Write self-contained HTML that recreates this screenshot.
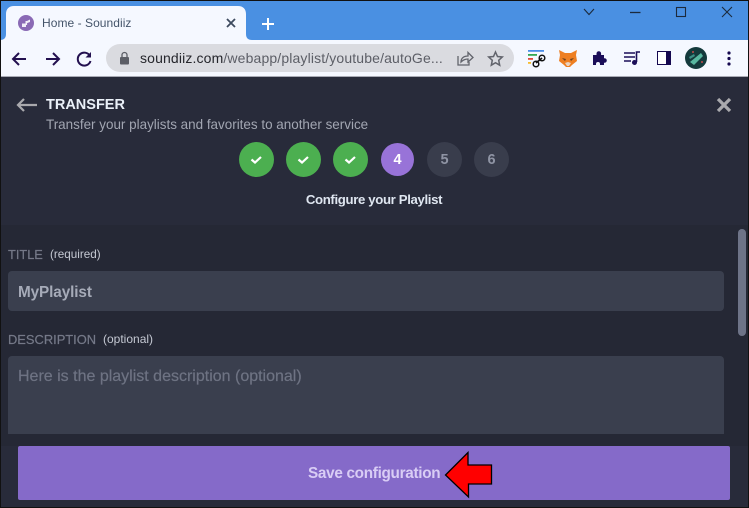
<!DOCTYPE html>
<html><head><meta charset="utf-8"><style>
html,body{margin:0;padding:0}
body{width:749px;height:508px;position:relative;overflow:hidden;background:#282b3a;font-family:"Liberation Sans",sans-serif}
.a{position:absolute;white-space:nowrap}
.c{position:absolute;width:35px;height:35px;border-radius:50%;top:142px;text-align:center;line-height:36px;font-weight:bold;font-size:14.500px}
</style></head><body>
<div class="a" style="left:0;top:0;width:749px;height:40px;background:#4a90e2"></div>
<div class="a" style="left:0;top:0;width:749px;height:1px;background:#111"></div>
<svg class="a" style="left:0;top:0" width="260" height="41" viewBox="0 0 260 41"><path d="M0 40 C4 40 6 38 6 34 V14 C6 9 9 6 14 6 H238 C243 6 246 9 246 14 V34 C246 38 248 40 252 40Z" fill="#f5f8ff"/></svg>
<svg class="a" style="left:18px;top:15px" width="16" height="16" viewBox="0 0 16 16"><circle cx="8" cy="8" r="8" fill="#8a6ab5"/><path d="M4 8.500h4v3.500H4zM8 6.500l4-2v2.500l-4 1.500z" fill="#f2eef8"/><rect x="7.500" y="6" width="1.600" height="4" fill="#f2eef8"/></svg>
<div class="a" style="left:42px;top:15px;font-size:12px;line-height:16px;color:#44546a;letter-spacing:.05px">Home - Soundiiz</div>
<svg class="a" style="left:225px;top:17px" width="12" height="12" viewBox="0 0 12 12"><path d="M2 2l8 8M10 2l-8 8" stroke="#3d4a5f" stroke-width="1.800"/></svg>
<svg class="a" style="left:261px;top:17px" width="14" height="14" viewBox="0 0 14 14"><path d="M7 1v12M1 7h12" stroke="#fff" stroke-width="2"/></svg>
<svg class="a" style="left:580px;top:4px" width="165" height="22" viewBox="0 0 165 22" fill="none" stroke="#1c2a3c" stroke-width="1.100"><path d="M4 5l5 5.500L14 5"/><path d="M50 8.500h10.500" stroke-width="1.300"/><rect x="96.500" y="3.500" width="9" height="9"/><path d="M142 3l10 10M152 3L142 13"/></svg>
<div class="a" style="left:0;top:40px;width:749px;height:36px;background:#f5f8ff"></div>
<div class="a" style="left:0;top:76px;width:749px;height:1px;background:#a9abb5"></div>
<svg class="a" style="left:10px;top:48px" width="90" height="22" viewBox="0 0 90 22" fill="none" stroke="#23104f" stroke-width="2"><path d="M3 11h13M9 5l-6 6 6 6"/><path d="M36 11h13M43 5l6 6-6 6"/><path d="M80 8a6.500 6.500 0 1 0 .5 5"/><path d="M81 4v5.500h-5.500" fill="#23104f" stroke="none"/></svg>
<div class="a" style="left:106px;top:44px;width:408px;height:28px;border-radius:14px;background:#dadbe0"></div>
<svg class="a" style="left:118px;top:51px" width="13" height="14" viewBox="0 0 13 14"><rect x="2" y="6" width="9" height="7.500" rx="1" fill="#5c5e66"/><path d="M4 6.500V4a2.500 2.500 0 0 1 5 0v2.500" fill="none" stroke="#5c5e66" stroke-width="1.300"/></svg>
<div class="a" style="left:140px;top:50px;font-size:14px;line-height:17px;color:#5c5e66;letter-spacing:.14px"><span style="color:#25262c">soundiiz.com</span>/webapp/playlist/youtube/autoGe...</div>
<svg class="a" style="left:455px;top:49px" width="50" height="20" viewBox="0 0 50 20" fill="none" stroke="#62646c" stroke-width="1.300"><path d="M3 7v9h11v-3"/><path d="M6 13c0-4 3-6 7-6V3.500l5 5-5 4.500V10c-3 0-5 1-7 3z"/><path d="M40.500 3l2 4.500 4.800.5-3.600 3.300 1 4.900-4.200-2.500-4.200 2.500 1-4.900L33.700 8l4.800-.5z" stroke-width="1.500"/></svg>
<svg class="a" style="left:528px;top:49px" width="24" height="20" viewBox="0 0 24 20"><rect y="1" width="16" height="1.800" fill="#4a8ee8"/><rect y="5" width="9" height="1.800" fill="#34a853"/><rect y="9" width="5" height="1.800" fill="#e04a3c"/><rect y="13" width="3" height="1.800" fill="#f7bc2e"/><path d="M8 14l6-5" fill="none" stroke="#111" stroke-width="1.700"/><circle cx="8" cy="15" r="2.800" fill="none" stroke="#111" stroke-width="1.500"/><circle cx="14" cy="9" r="2.800" fill="none" stroke="#111" stroke-width="1.500"/></svg>
<svg class="a" style="left:559px;top:49px" width="18" height="19" viewBox="0 0 18 19"><path d="M0 1l6 3h6l6-3-1 5 1 6-5 4-2 2H7l-2-2-5-4 1-6z" fill="#ee7f22"/><path d="M3 9l4 1-1 2zM15 9l-4 1 1 2z" fill="#6b4020"/><path d="M6 14l3-1 3 1-2 3H8z" fill="#e9d3c0"/></svg>
<svg class="a" style="left:592px;top:50px" width="16" height="16" viewBox="0 0 16 16"><path d="M1 5h3.500V3.500a2.300 2.300 0 0 1 4.600 0V5H12v3.200h.5a2.300 2.300 0 0 1 0 4.600H12V15H8v-1a2 2 0 0 0-4 0v1H1z" fill="#1b0e58"/></svg>
<svg class="a" style="left:623px;top:50px" width="18" height="16" viewBox="0 0 18 16"><path d="M1 3h11M1 7h11M1 11h7" stroke="#1b0e58" stroke-width="1.500"/><path d="M13.500 12V2h3.500" fill="none" stroke="#1b0e58" stroke-width="1.600"/><circle cx="11.500" cy="12.500" r="2.500" fill="#1b0e58"/></svg>
<div class="a" style="left:657px;top:51px;width:14px;height:14px;background:#fff;border:solid #15084f;border-width:1.500px 5px 1.500px 1.500px;box-sizing:border-box"></div>
<svg class="a" style="left:685px;top:47px" width="22" height="22" viewBox="0 0 22 22"><circle cx="11" cy="11" r="11" fill="#143a3c"/><path d="M5 15L16 6l2 3-9 9z" fill="#58b8a0"/><path d="M4 10l5-3 1 2-5 3z" fill="#3d8f85"/><circle cx="8" cy="5" r="1" fill="#c24a4a"/><circle cx="17" cy="15" r="1" fill="#c24a4a"/></svg>
<svg class="a" style="left:726px;top:50px" width="6" height="16" viewBox="0 0 6 16" fill="#15084f"><circle cx="3" cy="3" r="1.600"/><circle cx="3" cy="8.500" r="1.600"/><circle cx="3" cy="14" r="1.600"/></svg>
<div class="a" style="left:0;top:77px;width:749px;height:148px;background:#282b3a"></div>
<div class="a" style="left:0;top:225px;width:749px;height:221px;background:#252835"></div>
<svg class="a" style="left:16px;top:97px" width="22" height="16" viewBox="0 0 22 16" fill="none" stroke="#a9a9ad" stroke-width="2.200"><path d="M1.500 8H21M8 2L2 8l6 6"/></svg>
<div class="a" style="left:46px;top:97px;font-size:14.500px;line-height:17px;font-weight:bold;color:#eaf0f8">TRANSFER</div>
<div class="a" style="left:46px;top:117px;font-size:13.450px;line-height:16px;color:#a2a6b2">Transfer your playlists and favorites to another service</div>
<svg class="a" style="left:716px;top:97px" width="16" height="16" viewBox="0 0 16 16"><path d="M2 2l12 12M14 2L2 14" stroke="#a9a9ad" stroke-width="3.300"/></svg>
<div class="c" style="left:239px;background:#4caf50"></div>
<div class="c" style="left:286px;background:#4caf50"></div>
<div class="c" style="left:333px;background:#4caf50"></div>
<svg class="a" style="left:239px;top:142px" width="130" height="35" viewBox="0 0 130 35" fill="none" stroke="#fff" stroke-width="2.200"><path d="M12.500 17.500l3.500 3 6-5.500M59.500 17.500l3.500 3 6-5.500M106.500 17.500l3.500 3 6-5.500"/></svg>
<div class="c" style="left:381px;top:143px;width:33px;height:33px;line-height:34px;background:#9873d8;color:#fff">4</div>
<div class="c" style="left:427px;background:#393d4c;color:#8f94a4">5</div>
<div class="c" style="left:474px;background:#393d4c;color:#8f94a4">6</div>
<div class="a" style="left:0;top:192px;width:749px;text-align:center;font-size:13.200px;line-height:16px;font-weight:bold;color:#dfe6f0;letter-spacing:-.35px;text-indent:-1px">Configure your Playlist</div>
<div class="a" style="left:8px;top:247px;font-size:12.800px;line-height:16px;color:#757988;-webkit-text-stroke:.2px #757988">TITLE</div>
<div class="a" style="left:50px;top:248px;font-size:11.700px;line-height:14px;color:#c4c8d2">(required)</div>
<div class="a" style="left:8px;top:271px;width:716px;height:40px;border-radius:4px;background:#3a3f4e"></div>
<div class="a" style="left:18px;top:284px;font-size:15.300px;line-height:18px;font-weight:bold;color:#a6abb8;letter-spacing:-.1px">MyPlaylist</div>
<div class="a" style="left:8px;top:332px;font-size:12.900px;line-height:16px;color:#757988;-webkit-text-stroke:.2px #757988">DESCRIPTION</div>
<div class="a" style="left:103px;top:332px;font-size:12px;line-height:14px;color:#c4c8d2">(optional)</div>
<div class="a" style="left:8px;top:356px;width:716px;height:78px;border-radius:4px 4px 0 0;background:#3a3f4e"></div>
<div class="a" style="left:18px;top:368px;font-size:16px;line-height:18px;color:#6e7383;-webkit-text-stroke:.2px #6e7383">Here is the playlist description (optional)</div>
<div class="a" style="left:738px;top:229px;width:8px;height:107px;border-radius:4px;background:#6e7488"></div>
<div class="a" style="left:18px;top:446px;width:712px;height:54px;border-radius:2px;background:#856ac9"></div>
<div class="a" style="left:308px;top:465px;font-size:15.300px;line-height:18px;font-weight:bold;color:#d9cdf5;letter-spacing:-.3px">Save configuration</div>
<svg class="a" style="left:444px;top:451px" width="50" height="48" viewBox="0 0 50 48"><path d="M1.500 24L24 1.500V14H47.500V33H24.500V46z" fill="#f00" stroke="#000" stroke-width="1.300"/></svg>
<div class="a" style="left:0;top:0;width:1px;height:508px;background:#111"></div>
<div class="a" style="left:748px;top:0;width:1px;height:508px;background:#111"></div>
<div class="a" style="left:0;top:507px;width:749px;height:1px;background:#111"></div>
</body></html>
